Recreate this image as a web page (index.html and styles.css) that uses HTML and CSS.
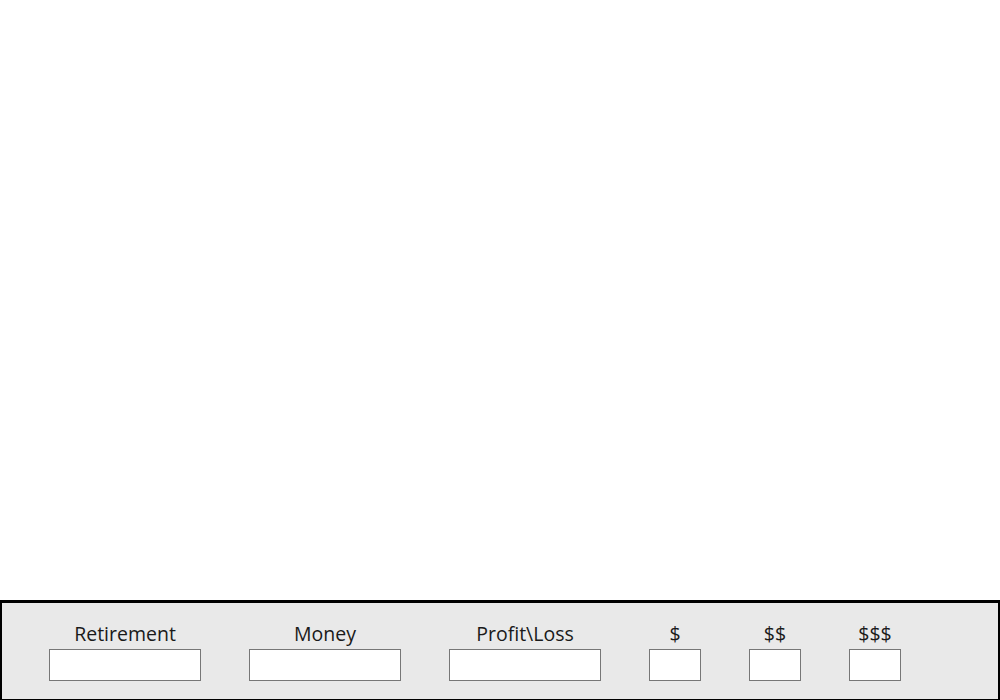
FILE: index.html
```html
<!DOCTYPE html>
<html>
<head>
<meta charset="utf-8">
<link rel="stylesheet" href="styles.css">
</head>
<body>
<div class="page">
  <main class="canvas"></main>
  <footer class="bar">
    <div class="field wide"><label>Retirement</label><input type="text"></div>
    <div class="field wide"><label>Money</label><input type="text"></div>
    <div class="field wide"><label>Profit\Loss</label><input type="text"></div>
    <div class="field narrow"><label>$</label><input type="text"></div>
    <div class="field narrow"><label>$$</label><input type="text"></div>
    <div class="field narrow"><label>$$$</label><input type="text"></div>
  </footer>
</div>
</body>
</html>
```
FILE: styles.css
```css
html, body {
  margin: 0;
  padding: 0;
  background: #fff;
}
.page {
  display: flex;
  flex-direction: column;
  height: 700px;
  font-family: "Open Sans", "Noto Sans", sans-serif;
}
.canvas {
  flex: 1;
  background: #fff;
}
.bar {
  box-sizing: border-box;
  height: 100px;
  background: #e9e9e9;
  border: 2px solid #000;
  border-top-width: 3px;
  border-bottom-width: 1px;
  padding: 19px 0 0 47px;
  display: flex;
  gap: 48px;
}
.field {
  display: flex;
  flex-direction: column;
  align-items: center;
}
.field label {
  font-size: 19.5px;
  line-height: 24px;
  height: 24px;
  margin-bottom: 3px;
  color: #1a1a1a;
}
.field input {
  box-sizing: border-box;
  height: 32px;
  margin: 0;
  padding: 0;
  border: 1px solid #777;
  background: #fff;
  outline: none;
}
.wide input { width: 152px; }
.narrow input { width: 52px; }
```
